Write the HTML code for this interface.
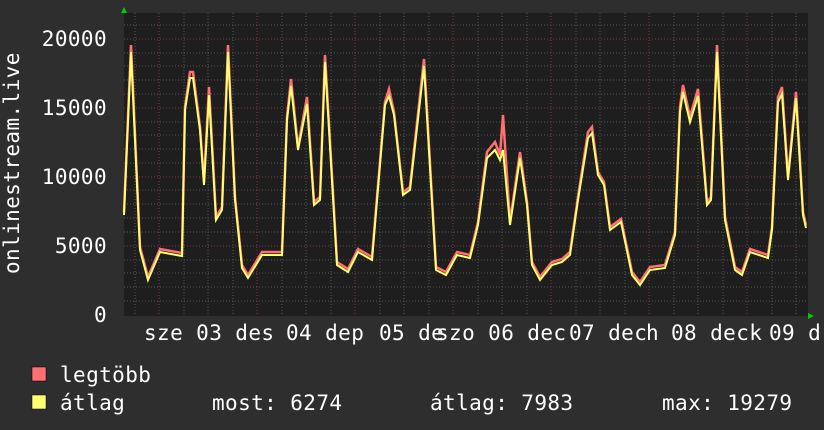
<!DOCTYPE html><html><head><style>body{margin:0;background:#2e2e2e}svg{display:block}text{font-family:"DejaVu Sans Mono","Liberation Mono",monospace;fill:#fff;font-size:21px;letter-spacing:0.4px}</style></head><body>
<svg width="824" height="430" xmlns="http://www.w3.org/2000/svg">
<rect width="824" height="430" fill="#2e2e2e"/>
<rect x="124" y="13" width="684" height="303" fill="#1e1e1e"/>
<g stroke="#555" stroke-width="1" stroke-dasharray="1,2">
<path d="M124 301H808M124 287H808M124 273H808M124 260H808M124 232H808M124 218H808M124 204H808M124 190H808M124 163H808M124 149H808M124 135H808M124 122H808M124 94H808M124 80H808M124 66H808M124 53H808M124 25H808"/>
<path d="M135 13V316M159 13V316M184 13V316M208 13V316M233 13V316M257 13V316M282 13V316M306 13V316M331 13V316M355 13V316M380 13V316M404 13V316M429 13V316M453 13V316M478 13V316M502 13V316M527 13V316M551 13V316M576 13V316M600 13V316M625 13V316M649 13V316M674 13V316M698 13V316M723 13V316M747 13V316M772 13V316M796 13V316"/>
</g>
<g stroke="#7a3a3a" stroke-width="1" stroke-dasharray="1,2">
<path d="M124 246H808M124 177H808M124 108H808M124 39H808"/>
<path d="M159 13V316M257 13V316M355 13V316M453 13V316M551 13V316M649 13V316M747 13V316"/>
</g>
<polyline fill="none" stroke="#ff7070" stroke-width="2.5" transform="translate(0,-3)" points="124,215 131,48 140,250 148,280 160,252 182,256 185,110 190,75 193,75 200,130 204,185 209,90 216,220 222,210 228,48 235,200 242,268 248,278 262,255 282,255 287,120 291,82 298,150 307,100 314,205 320,200 325,58 337,265 348,272 358,252 372,260 385,105 389,92 394,115 403,195 410,190 424,62 436,270 446,275 457,255 470,258 478,225 487,155 495,145 500,158 503,118 510,225 520,155 527,205 532,265 540,280 552,265 562,262 570,255 578,200 588,135 592,130 598,175 604,185 610,230 621,222 632,275 640,285 650,270 665,268 675,235 680,110 683,88 690,120 698,92 707,205 711,200 717,48 725,220 735,270 742,275 750,252 768,258 772,230 778,100 782,90 788,180 796,95 803,215 806,228"/>
<polyline fill="none" stroke="#ffff70" stroke-width="2" points="124,215 131,52 140,250 148,280 160,252 182,256 185,110 190,78 193,78 200,130 204,185 209,95 216,220 222,210 228,52 235,200 242,268 248,278 262,255 282,255 287,120 291,86 298,150 307,104 314,205 320,200 325,62 337,265 348,272 358,252 372,260 385,105 389,96 394,115 403,195 410,190 424,66 436,270 446,275 457,255 470,258 478,225 487,158 495,150 500,160 503,150 510,225 520,158 527,205 532,265 540,280 552,265 562,262 570,255 578,200 588,138 592,133 598,175 604,185 610,230 621,222 632,275 640,285 650,270 665,268 675,235 680,112 683,92 690,122 698,96 707,205 711,200 717,52 725,220 735,270 742,275 750,252 768,258 772,230 778,102 782,94 788,180 796,98 803,215 806,228"/>
<path d="M121 13l3-6 3 6z M808 313l6 3-6 3z" fill="#0c0"/>
<g text-anchor="end"><text x="107" y="46">20000</text><text x="107" y="115">15000</text><text x="107" y="184">10000</text><text x="107" y="253">5000</text><text x="107" y="322">0</text></g>
<text transform="translate(19,274) rotate(-90)">onlinestream.live</text>
<text x="144" y="340">sze 03 des</text><text x="286" y="340">04 dep</text><text x="379" y="340">05 de</text><text x="436" y="340">szo 06 dec</text><text x="569" y="340">07 dec</text><text x="646" y="340">h</text><text x="671" y="340">08 deck</text><text x="769" y="340">09 d</text>
<rect x="32" y="367" width="14" height="14" fill="#ff7070" stroke="#000" stroke-width="0.5"/>
<rect x="32" y="395" width="14" height="14" fill="#ffff70" stroke="#000" stroke-width="0.5"/>
<text x="60" y="382">legtöbb</text><text x="60" y="410">átlag</text>
<text x="212" y="410">most: 6274</text><text x="430" y="410">átlag: 7983</text><text x="662" y="410">max: 19279</text>
</svg></body></html>
